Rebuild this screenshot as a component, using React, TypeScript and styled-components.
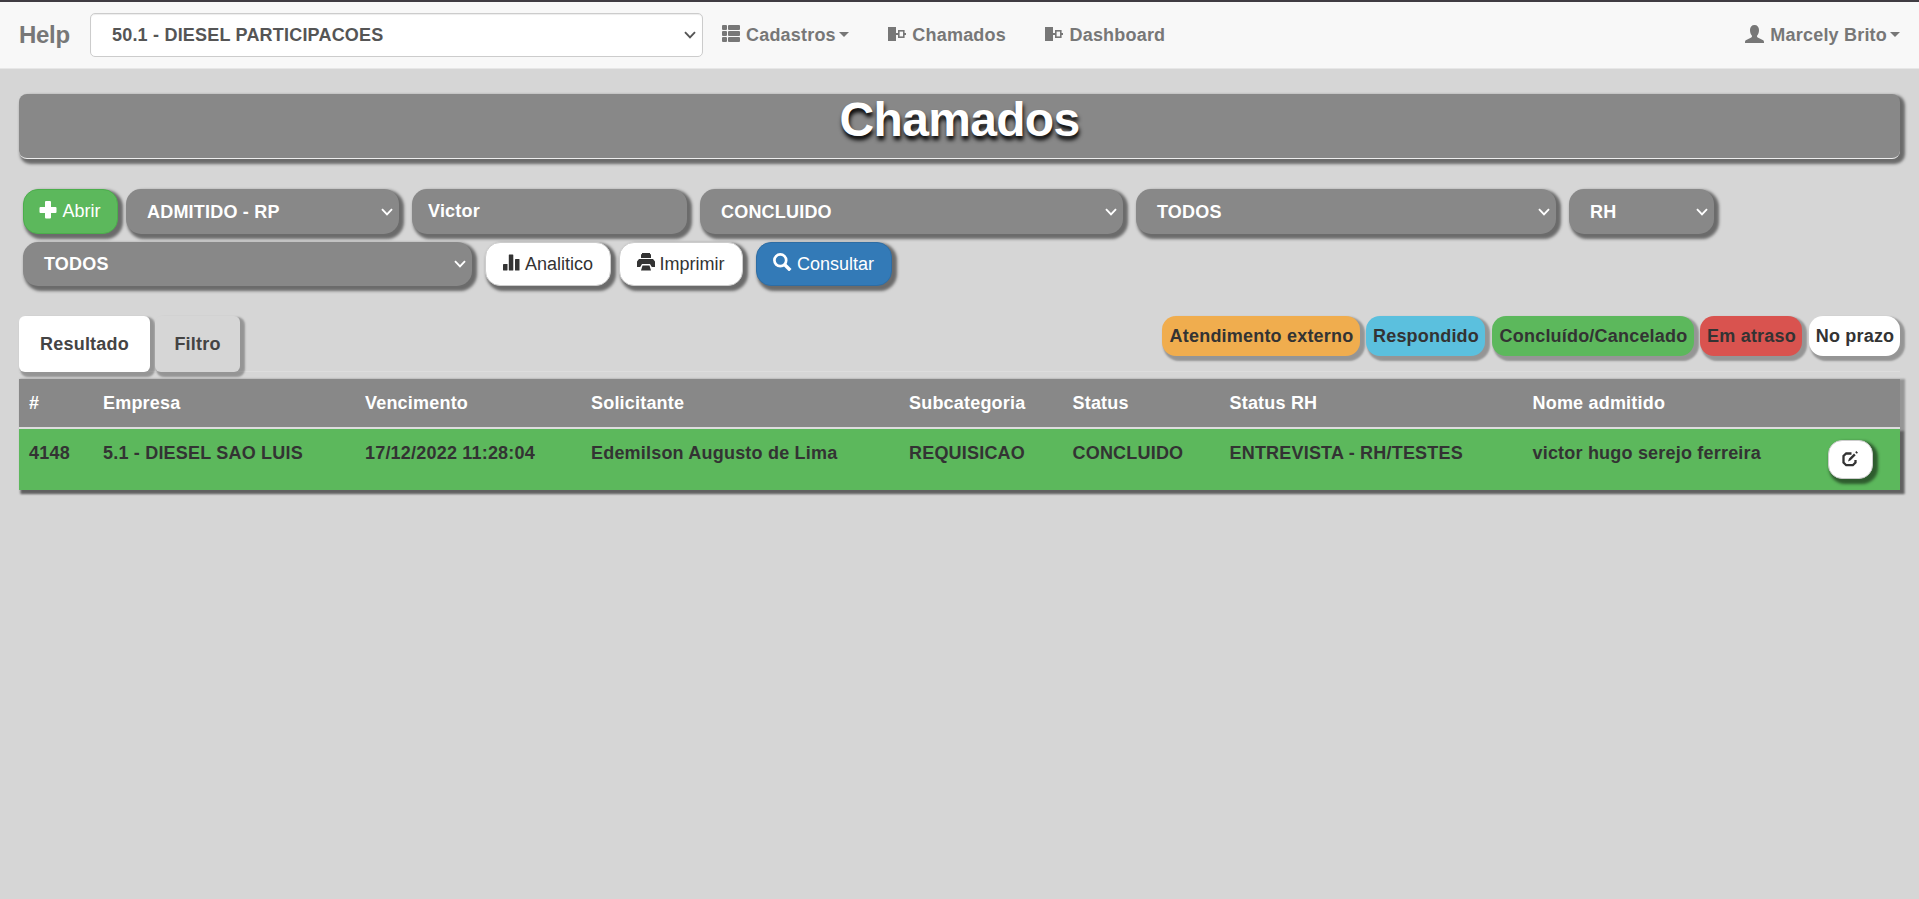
import React from "react";
import styled, { createGlobalStyle, css } from "styled-components";

const Global = createGlobalStyle`
  *, *::before, *::after { box-sizing: border-box; }
  html { min-height: 100%; background: #d6d6d6; }
  body { margin: 0; color: #333; background: #d6d6d6;
    font-family: "Liberation Sans", Arial, Helvetica, sans-serif; font-size: 18px; line-height: 26px; }
`;

const boldText = css`font-weight: bold; letter-spacing: 0.2px;`;
const softShadow = css`box-shadow: 3px 3px 2px 2px rgba(0, 0, 0, 0.3);`;
const hardShadow = css`box-shadow: 3px 3px 3px 2px rgba(0, 0, 0, 0.5);`;

const Navbar = styled.nav`
  display: flex; align-items: center; height: 69px; padding: 0 19px 1px 19px;
  background: #f8f8f8; border-top: 2px solid #403c42; border-bottom: 1px solid #e7e7e7;
  color: #777; ${boldText}
`;
const Brand = styled.a`width: 71px; font-size: 24px; letter-spacing: -0.3px;`;
const NavItem = styled.a<{ $gap?: number; $push?: boolean }>`
  display: flex; align-items: center; margin-left: ${p => (p.$push ? "auto" : `${p.$gap}px`)};
  svg { margin: 0 6px 2px 0; }
`;
const Caret = styled.span`
  margin-left: 3px; border-top: 5px solid #777; border-left: 5px solid transparent; border-right: 5px solid transparent;
`;

const SelectBox = styled.div<{ $w: number; $h?: number; $light?: boolean }>`
  display: flex; align-items: center; justify-content: space-between;
  width: ${p => p.$w}px; height: ${p => p.$h ?? 45}px; padding: 0 6px 0 21px; ${boldText}
  ${p => p.$light
    ? css`background: #fff; color: #555; border: 1px solid #ccc; border-radius: 5px;
          box-shadow: inset 0 1px 1px rgba(0, 0, 0, 0.075);`
    : css`background: #888; color: #fff; border-radius: 15px; ${hardShadow}`}
`;
const TextField = styled(SelectBox)`padding-left: 16px; padding-bottom: 2px;`;

const Page = styled.main`min-height: calc(100vh - 69px); padding: 25px 19px 0;`;
const Title = styled.h1`
  margin: 0; height: 65px; border-bottom: 1px solid #eee; border-radius: 8px;
  background: #888; color: #fff; text-align: center; font-size: 48px; line-height: 52px; letter-spacing: -0.7px;
  text-shadow: 1px 4px 4px #000; ${hardShadow}
`;
const Filters = styled.section`padding: 30px 4px 0;`;
const FilterRow = styled.div<{ $top?: number }>`display: flex; margin-top: ${p => p.$top ?? 0}px;`;
const Space = styled.span<{ $w: number }>`width: ${p => p.$w}px; flex: none;`;

const tones = {
  green: css`background: #5cb85c; border-color: #4cae4c; color: #fff;`,
  blue: css`background: #337ab7; border-color: #2e6da4; color: #fff;`,
  white: css`background: #fff; border-color: #ccc; color: #333;`,
};
const Button = styled.button<{ $w: number; $h?: number; $tone: keyof typeof tones }>`
  display: flex; align-items: center; justify-content: center;
  width: ${p => p.$w}px; height: ${p => p.$h ?? 44}px; padding: 0 1px 1px 0; border: 1px solid; border-radius: 15px;
  font: inherit; ${hardShadow}
  ${p => tones[p.$tone]}
  svg { margin: 0 5px 3px 0; }
`;
const EditButton = styled(Button)`
  margin: 0 0 0 -1px; border-radius: 14px; padding: 0;
  svg { margin: 0 0 2px; }
`;

const TabBar = styled.div`
  display: flex; height: 56px; margin-top: 30px; border-bottom: 1px solid #ddd;
`;
const Tab = styled.div<{ $active?: boolean; $w: number }>`
  display: flex; align-items: center; justify-content: center; width: ${p => p.$w}px; height: 56px;
  margin-right: 5px; border-radius: 6px; color: #444; ${boldText}
  background: ${p => (p.$active ? "#fff" : "#d6d6d6")}; ${softShadow}
`;
const Legend = styled.div`display: flex; margin-left: auto;`;
const Label = styled.span<{ $bg: string; $w: number; $gap?: number }>`
  display: flex; align-items: center; justify-content: center; width: ${p => p.$w}px; height: 40px;
  margin-left: ${p => p.$gap ?? 0}px; padding-left: 1px; border-radius: 14px; white-space: nowrap; ${boldText}
  background: ${p => p.$bg}; ${softShadow}
`;

const Table = styled.div`margin-top: 7px; ${boldText} box-shadow: 3px 2px 2px 2px rgba(0, 0, 0, 0.3);`;
const columns = css`display: grid; grid-template-columns: 74px 262px 226px 318px 163.5px 157px 303px 296px 1fr; padding-left: 10px;`;
const HeadRow = styled.div`${columns} height: 50px; padding-top: 11px; background: #888; color: #fff; border-bottom: 2px solid #ddd;`;
const BodyRow = styled.div`${columns} height: 61px; padding-top: 11px; background: #5cb85c; box-shadow: 3px 3px 2px 1px rgba(0, 0, 0, 0.35);`;

const Svg = ({ size = 18, w = size, children }: { size?: number; w?: number; children: React.ReactNode }) => (
  <svg width={w} height={size} viewBox={`0 0 ${w} ${size}`} fill="currentColor">{children}</svg>
);
const Chevron = () => (
  <Svg size={12}><path d="M1 3.2 6 8.4 11 3.2" fill="none" stroke="currentColor" strokeWidth="1.9" /></Svg>
);
const ListIcon = () => (
  <Svg>{[0, 6, 12].map(y => <g key={y}><rect y={y} width="5" height="5" rx="1" /><rect x="6" y={y} width="12" height="5" rx="1" /></g>)}</Svg>
);
const ObjectIcon = () => (
  <Svg><rect y="2" width="8" height="14" /><rect x="10.800" y="5.800" width="5" height="6.400" fill="none" stroke="currentColor" strokeWidth="1.600" /><path d="M8 8h2.500v2H8zM16 8h2v2h-2z" /></Svg>
);
const UserIcon = () => (
  <Svg w={19}><path d="M9.500 0C12.300 0 14 2 14 5c0 2.300-.7 4.300-1.800 5.600-.4.700-.2 1.500.5 1.900l5 2.500c.8.400 1.300 1.200 1.300 2v1H0v-1c0-.8.5-1.600 1.300-2l5-2.500c.7-.4.9-1.200.5-1.900C5.700 9.300 5 7.300 5 5c0-3 1.700-5 4.500-5z" /></Svg>
);
const PlusIcon = () => <Svg><path d="M7 0h4a1 1 0 0 1 1 1v5h4.500a1 1 0 0 1 1 1v4a1 1 0 0 1-1 1H12v4.500a1 1 0 0 1-1 1H7a1 1 0 0 1-1-1V12H1.500a1 1 0 0 1-1-1V7a1 1 0 0 1 1-1H6V1a1 1 0 0 1 1-1z" /></Svg>;
const StatsIcon = () => <Svg><rect x="1" y="11" width="4.500" height="6.500" rx=".4" /><rect x="6.800" y="1.500" width="4.500" height="16" rx=".6" /><rect x="13" y="6" width="4.500" height="11.500" rx=".6" /></Svg>;
const PrintIcon = () => <Svg><path d="M5 0h8v1l1 .5V5H4V1.500L5 1zM2 6h14l2 2.500V14h-3.200L13 11H5l-1.800 3H0V8.500zM5.500 12.500h7L14 17.500H4z" /></Svg>;
const SearchIcon = () => <Svg w={19}><circle cx="7.300" cy="7.300" r="5.900" fill="none" stroke="currentColor" strokeWidth="2.700" /><path d="m11.300 11.300 6 6" stroke="currentColor" strokeWidth="3.400" /></Svg>;
const EditIcon = () => (
  <Svg size={16}><path d="M9.500 2.500H4.200L1.500 5v6.500l2.700 2.700h6.600l2.700-2.700V9" fill="none" stroke="currentColor" strokeWidth="2.300" /><path d="m6 10.500 1-3 5-5 1.700 1.700-5 5zM13.200 1.300 14.300 0l1.700 1.700-1.300 1.100z" /></Svg>
);

const Select = ({ w, h, light, children }: { w: number; h?: number; light?: boolean; children: string }) => (
  <SelectBox $w={w} $h={h} $light={light}>{children}<Chevron /></SelectBox>
);

export default function App() {
  return (
    <>
      <Global />
      <Navbar>
        <Brand>Help</Brand>
        <Select w={613} h={44} light>50.1 - DIESEL PARTICIPACOES</Select>
        <NavItem $gap={19}><ListIcon />Cadastros<Caret /></NavItem>
        <NavItem $gap={39.5}><ObjectIcon />Chamados</NavItem>
        <NavItem $gap={39.5}><ObjectIcon />Dashboard</NavItem>
        <NavItem $push><UserIcon />Marcely Brito<Caret /></NavItem>
      </Navbar>
      <Page>
        <Title>Chamados</Title>
        <Filters>
          <FilterRow>
            <Button $w={95} $h={45} $tone="green"><PlusIcon />Abrir</Button><Space $w={8} />
            <Select w={273}>ADMITIDO - RP</Select><Space $w={13} />
            <TextField $w={275}>Victor</TextField><Space $w={13} />
            <Select w={423}>CONCLUIDO</Select><Space $w={13} />
            <Select w={420}>TODOS</Select><Space $w={13} />
            <Select w={145}>RH</Select>
          </FilterRow>
          <FilterRow $top={8}>
            <Select w={449} h={44}>TODOS</Select><Space $w={13} />
            <Button $w={126} $tone="white"><StatsIcon />Analitico</Button><Space $w={8} />
            <Button $w={124} $tone="white"><PrintIcon />Imprimir</Button><Space $w={13} />
            <Button $w={136} $tone="blue"><SearchIcon />Consultar</Button>
          </FilterRow>
        </Filters>
        <TabBar>
          <Tab $active $w={131}>Resultado</Tab>
          <Tab $w={85}>Filtro</Tab>
          <Legend>
            <Label $bg="#f0ad4e" $w={198}>Atendimento externo</Label>
            <Label $bg="#5bc0de" $w={119} $gap={6}>Respondido</Label>
            <Label $bg="#5cb85c" $w={202} $gap={7}>Concluído/Cancelado</Label>
            <Label $bg="#d9534f" $w={102} $gap={6}>Em atraso</Label>
            <Label $bg="#fff" $w={91} $gap={7}>No prazo</Label>
          </Legend>
        </TabBar>
        <Table>
          <HeadRow>
            <span>#</span><span>Empresa</span><span>Vencimento</span><span>Solicitante</span><span>Subcategoria</span>
            <span>Status</span><span>Status RH</span><span>Nome admitido</span><span />
          </HeadRow>
          <BodyRow>
            <span>4148</span><span>5.1 - DIESEL SAO LUIS</span><span>17/12/2022 11:28:04</span>
            <span>Edemilson Augusto de Lima</span><span>REQUISICAO</span><span>CONCLUIDO</span>
            <span>ENTREVISTA - RH/TESTES</span><span>victor hugo serejo ferreira</span>
            <EditButton $w={45} $h={39} $tone="white"><EditIcon /></EditButton>
          </BodyRow>
        </Table>
      </Page>
    </>
  );
}
